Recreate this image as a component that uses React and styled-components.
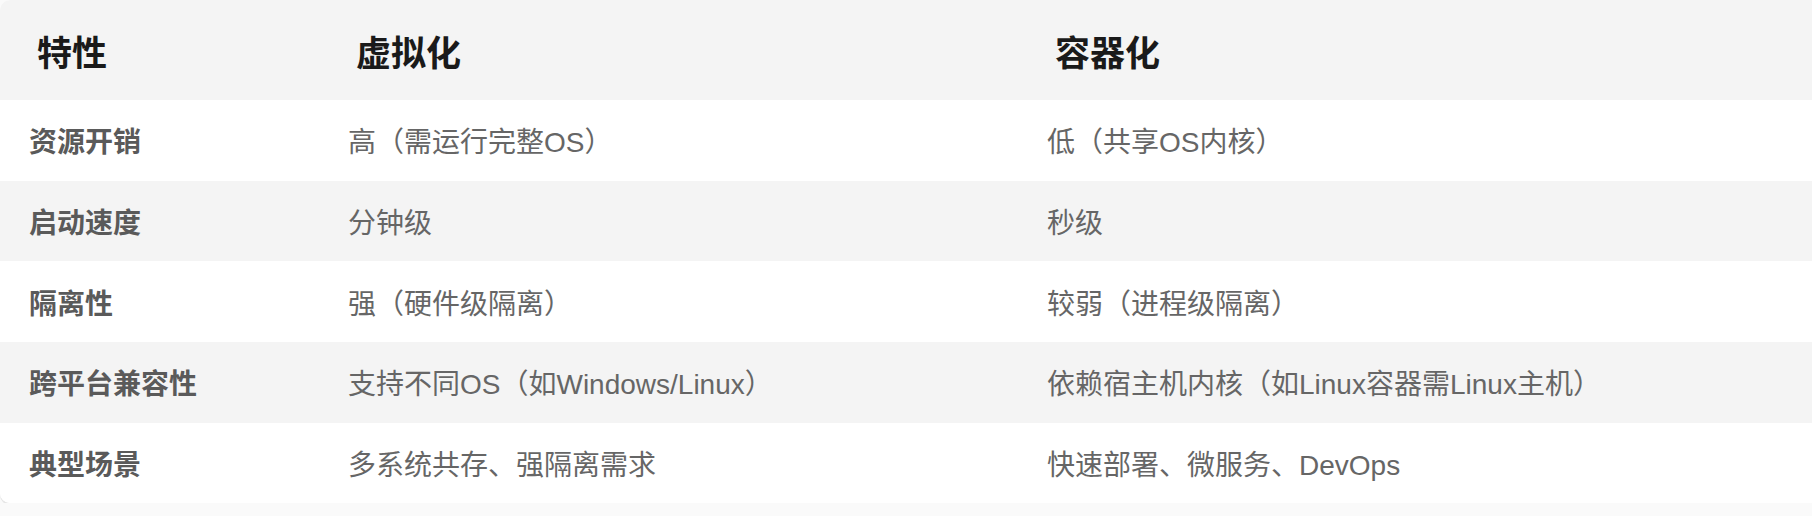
import React from "react";
import styled, { createGlobalStyle } from "styled-components";

const GlobalStyle = createGlobalStyle`
  html, body {
    margin: 0;
    padding: 0;
    background: #fafafa;
  }
`;

const Wrapper = styled.div`
  width: 100%;
  overflow: hidden;
  border-radius: 10px 0 0 10px;
  background: #ffffff;
  box-shadow: 0 2px 0 #e6e6e6;
`;

const Table = styled.table`
  width: 100%;
  border-collapse: collapse;
  table-layout: fixed;
  font-family: "Liberation Sans", "Noto Sans CJK SC", sans-serif;
`;

const HeadCell = styled.th`
  height: 100px;
  padding: 0 37px;
  background: #f4f4f4;
  color: #1a1a1a;
  font-size: 35px;
  font-weight: 700;
  text-align: left;
  vertical-align: middle;
`;

const Row = styled.tr`
  height: 80.7px;
  background: ${(p) => (p.$striped ? "#f4f4f4" : "#ffffff")};
`;

const Cell = styled.td`
  padding: 0 29px;
  font-size: 28px;
  vertical-align: middle;
  white-space: nowrap;
  color: ${(p) => (p.$label ? "#5a5a5a" : "#666666")};
  font-weight: ${(p) => (p.$label ? 700 : 400)};
`;

const rows = [
  ["资源开销", "高（需运行完整OS）", "低（共享OS内核）"],
  ["启动速度", "分钟级", "秒级"],
  ["隔离性", "强（硬件级隔离）", "较弱（进程级隔离）"],
  ["跨平台兼容性", "支持不同OS（如Windows/Linux）", "依赖宿主机内核（如Linux容器需Linux主机）"],
  ["典型场景", "多系统共存、强隔离需求", "快速部署、微服务、DevOps"],
];

const App = () => {
  return (
    <>
      <GlobalStyle />
      <Wrapper>
        <Table>
          <colgroup>
            <col style={{ width: 319 }} />
            <col style={{ width: 699 }} />
            <col />
          </colgroup>
          <thead>
            <tr>
              <HeadCell>特性</HeadCell>
              <HeadCell>虚拟化</HeadCell>
              <HeadCell>容器化</HeadCell>
            </tr>
          </thead>
          <tbody>
            {rows.map((r, i) => (
              <Row key={r[0]} $striped={i % 2 === 1}>
                <Cell $label>{r[0]}</Cell>
                <Cell>{r[1]}</Cell>
                <Cell>{r[2]}</Cell>
              </Row>
            ))}
          </tbody>
        </Table>
      </Wrapper>
    </>
  );
};

export default App;
